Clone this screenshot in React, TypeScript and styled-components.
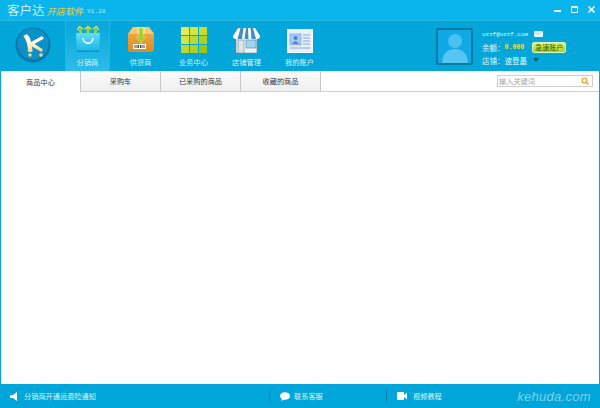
import { createGlobalStyle } from "styled-components";
import styled from "styled-components";
import type { ReactNode } from "react";

const GlobalStyle = createGlobalStyle`
  html, body { margin: 0; padding: 0; background: #fff; }
  #root { width: 600px; height: 408px; }
  * { box-sizing: border-box; }
`;

const cjk = `"Noto Sans CJK SC", "Liberation Sans", sans-serif`;

const Window = styled.div`
  width: 600px;
  height: 408px;
  display: flex;
  flex-direction: column;
  font-family: ${cjk};
  overflow: hidden;
  background: #00a6d9;
`;

const TitleBar = styled.div`
  height: 20px;
  flex: none;
  background: #0ab5ee;
  display: flex;
  align-items: center;
  padding: 0 5px 0 7px;
`;

const Brand = styled.span`
  font-size: 12.5px;
  line-height: 20px;
  color: #cdeefa;
`;

const Product = styled.span`
  font-size: 9.2px;
  font-style: italic;
  color: #ffd21e;
  margin-left: 2px;
  margin-top: 1px;
`;

const Version = styled.span`
  font-family: "Liberation Mono", monospace;
  font-size: 6px;
  color: #bfe9f7;
  margin-left: 4px;
  margin-top: 3px;
`;

const WindowButtons = styled.div`
  margin-left: auto;
  display: flex;
  gap: 10px;
  align-items: center;
  margin-top: -2px;
`;

const Header = styled.div`
  height: 51px;
  flex: none;
  display: flex;
  background: #02a6d8;
  border-top: 1px solid #2bb9e4;
`;

const LogoCell = styled.div`
  width: 65px;
  flex: none;
  padding: 6px 0 0 15px;
`;

const NavItem = styled.div<{ $active?: boolean }>`
  width: 45px;
  margin-right: 8px;
  flex: none;
  display: flex;
  flex-direction: column;
  align-items: center;
  padding-top: 5px;
  background: ${({ $active }) =>
    $active ? "linear-gradient(180deg, #08a6d9 0%, #2cbcea 100%)" : "transparent"};
  border-left: ${({ $active }) => ($active ? "1px solid #27b4e0" : "none")};
  border-right: ${({ $active }) => ($active ? "1px solid #27b4e0" : "none")};
`;

const NavIcon = styled.div`
  height: 27px;
  display: flex;
  align-items: flex-end;
  justify-content: center;
`;

const NavLabel = styled.span`
  font-size: 7.2px;
  line-height: 10px;
  margin-top: 4px;
  color: #d9f3fb;
  white-space: nowrap;
`;

const Profile = styled.div`
  margin-left: auto;
  width: 164px;
  flex: none;
  display: flex;
  align-items: flex-start;
  padding-top: 7px;
`;

const Avatar = styled.div`
  width: 37px;
  height: 37px;
  border: 2px solid #0b78a8;
  border-radius: 2px;
  background: #0ea9e3;
  overflow: hidden;
  flex: none;
`;

const Info = styled.div`
  margin-left: 9px;
  display: flex;
  flex-direction: column;
  gap: 1px;
`;

const InfoRow = styled.div`
  display: flex;
  align-items: center;
  height: 12px;
  font-size: 7.5px;
  color: #e3f6fc;
  white-space: nowrap;
`;

const Email = styled.span`
  font-family: "Liberation Mono", monospace;
  font-size: 5.9px;
  color: #e3f6fc;
  margin-right: 6px;
`;

const Amount = styled.span`
  font-family: "Liberation Mono", monospace;
  font-size: 6.6px;
  font-weight: bold;
  color: #ffd83c;
  margin: 0 8px 0 0;
`;

const TopUp = styled.span`
  height: 11px;
  line-height: 9px;
  padding: 0 2px;
  font-size: 7px;
  color: #355a05;
  background: linear-gradient(180deg, #e6f36a, #a6d422);
  border: 1px solid #dff2c0;
  border-radius: 2px;
`;

const Shop = styled.span`
  margin-right: 6px;
`;

const TabBar = styled.div`
  height: 21px;
  flex: none;
  display: flex;
  align-items: stretch;
  background: #fff;
  border-bottom: 1px solid #d2d2d2;
  margin: 0 1px;
  padding-right: 6px;
`;

const Tab = styled.div<{ $active?: boolean }>`
  width: 80px;
  height: ${({ $active }) => ($active ? "21px" : "20px")};
  flex: none;
  display: flex;
  align-items: center;
  justify-content: center;
  font-size: 7.2px;
  color: #333;
  background: ${({ $active }) =>
    $active ? "#fff" : "linear-gradient(180deg, #fbfbfb, #efefef)"};
  border-right: 1px solid #c8c8c8;
  position: relative;
  z-index: ${({ $active }) => ($active ? 1 : 0)};
`;

const Search = styled.div`
  margin-left: auto;
  align-self: center;
  width: 96px;
  height: 12px;
  border: 1px solid #cfcfcf;
  background: #fff;
  display: flex;
  align-items: center;
  justify-content: space-between;
  padding: 0 3px 0 1px;
  font-size: 7.2px;
  color: #a8a8a8;
`;

const Content = styled.div`
  flex: 1;
  background: #fff;
  margin: 0 1px;
`;

const Footer = styled.div`
  height: 24px;
  flex: none;
  display: flex;
  align-items: center;
  background: #00a6d9;
  color: #dff4fb;
  font-size: 7.2px;
`;

const FooterCell = styled.div<{ $width: number; $gap: number }>`
  width: ${({ $width }) => $width}px;
  flex: none;
  height: 12px;
  display: flex;
  align-items: center;
  padding-left: 10px;
  gap: ${({ $gap }) => $gap}px;
  border-right: 1px solid #0b7eab;
  white-space: nowrap;
`;

const FooterLast = styled(FooterCell)`
  border-right: none;
`;

const Site = styled.span`
  margin-left: auto;
  margin-right: 9px;
  font-family: "Liberation Sans", sans-serif;
  font-style: italic;
  font-size: 13px;
  letter-spacing: 0.3px;
  color: #7fd0ea;
`;

const LogoIcon = () => (
  <svg width="36" height="36" viewBox="0 0 36 36" style={{ display: "block" }}>
    <defs>
      <linearGradient id="k" x1="0" y1="0" x2="0" y2="1">
        <stop offset="0" stopColor="#ffffff" />
        <stop offset="0.55" stopColor="#fff6d8" />
        <stop offset="1" stopColor="#f7d27c" />
      </linearGradient>
    </defs>
    <circle cx="18" cy="18" r="17.5" fill="#0a78ad" />
    <circle cx="18" cy="17" r="15.5" fill="#0c90c8" />
    <path d="M8.5 9 L12 7 Q15 10 16 15 L27 9 L29 11.5 L19.5 17 L28 22.5 L26.5 25 L17 19.5 Q17.5 22 17.5 25 H13 Q13 15 8.5 9 Z" fill="url(#k)" />
    <circle cx="15" cy="28" r="1.8" fill="#f7d27c" />
    <circle cx="26" cy="28" r="1.8" fill="#f7d27c" />
  </svg>
);

const BagIcon = () => (
  <svg width="26" height="27" viewBox="0 0 26 27">
    <defs>
      <linearGradient id="bag" x1="0" y1="0" x2="0" y2="1">
        <stop offset="0" stopColor="#5fe0f4" />
        <stop offset="1" stopColor="#16b4e8" />
      </linearGradient>
    </defs>
    <path d="M6.5 11 L5 3 M13 11 V2 M19.5 11 L21 3" stroke="#a9d62a" strokeWidth="2.6" fill="none" />
    <path d="M2.5 4 L4.5 0.5 L8 3 M9.5 3.5 L13 0.5 L16.5 3.5 M18 3 L21.5 0.5 L23.5 4" stroke="#dbe83f" strokeWidth="1.5" fill="none" />
    <path d="M1 7 H25 L24 26 H2 Z" fill="url(#bag)" />
    <rect x="2" y="24.5" width="22" height="1.5" fill="#0d93c7" />
    <path d="M8 12 C9 19 17 19 18 12" fill="none" stroke="#fff" strokeWidth="1.4" />
  </svg>
);

const BoxIcon = () => (
  <svg width="26" height="27" viewBox="0 0 26 27">
    <defs>
      <linearGradient id="box" x1="0" y1="0" x2="0" y2="1">
        <stop offset="0" stopColor="#f3b04c" />
        <stop offset="1" stopColor="#dd8a22" />
      </linearGradient>
    </defs>
    <path d="M5 1 H21 L26 8 V24 Q26 26 24 26 H2 Q0 26 0 24 V8 Z" fill="url(#box)" />
    <path d="M5 1 H21 L26 8 H0 Z" fill="#f7c873" />
    <rect x="9" y="1" width="8" height="7" fill="#fbdc95" />
    <path d="M11 2 H15 V11 H18 L13 17 L8 11 H11 Z" fill="#a4d02d" stroke="#d9ea80" strokeWidth="0.5" />
    <rect x="5" y="18" width="13" height="5" fill="#fff" />
    <path d="M7 19 V22 M9 19 V22 M10.5 19 V22 M12.5 19 V22 M14 19 V22 M16 19 V22" stroke="#444" strokeWidth="1" />
  </svg>
);

const GridIcon = () => {
  const colors = ["#e2ee59", "#d3e640", "#c4dd30", "#d3e640", "#c0da2a", "#aed21f", "#bcd92a", "#aed21f", "#9ac614"];
  return (
    <svg width="26" height="26" viewBox="0 0 26 26">
      {colors.map((c, i) => (
        <rect key={i} x={(i % 3) * 9} y={Math.floor(i / 3) * 9} width="8" height="8" fill={c} />
      ))}
    </svg>
  );
};

const StoreIcon = () => (
  <svg width="27" height="26" viewBox="0 0 27 26">
    <rect x="3" y="9" width="21" height="17" fill="#eef3f6" stroke="#6f8590" strokeWidth="0.6" />
    <rect x="5" y="13" width="6" height="13" fill="#dce6ea" stroke="#6f8590" strokeWidth="0.6" />
    <rect x="13" y="13" width="10" height="8" fill="#9bd6ef" stroke="#6f8590" strokeWidth="0.6" />
    <path d="M5 1 H22 L27 9 Q27 12 24 12 H3 Q0 12 0 9 Z" fill="#fff" />
    <path d="M7.5 1 H10.5 L9 12 H4.5 Z M13 1 H15 L15.5 12 H11.5 Z M17.5 1 H20 L23 12 H18.5 Z" fill="#3f8fc6" />
  </svg>
);

const CardIcon = () => (
  <svg width="26" height="24" viewBox="0 0 26 24">
    <rect x="0.5" y="0.5" width="25" height="23" fill="#e8f0fb" stroke="#fff" />
    <rect x="3" y="5" width="11" height="11" fill="#a9c8f0" stroke="#6f9adf" strokeWidth="0.6" />
    <circle cx="8.5" cy="9" r="2" fill="#4d82cf" />
    <path d="M5 15 Q8.5 9.5 12 15 Z" fill="#4d82cf" />
    <path d="M16 6 H23 M16 9 H23 M16 12 H23 M16 15 H23 M3 19 H23" stroke="#7ea6e2" strokeWidth="1" />
  </svg>
);

const AvatarArt = () => (
  <svg width="33" height="33" viewBox="0 0 33 33" style={{ display: "block" }}>
    <rect width="33" height="33" fill="#0fa9e6" />
    <circle cx="17" cy="11" r="7" fill="#4cc0ef" />
    <path d="M4 33 Q5 19 17 19 Q29 19 30 33 Z" fill="#55c6f1" />
  </svg>
);

const navItems: { label: string; icon: ReactNode; active?: boolean }[] = [
  { label: "分销商", icon: <BagIcon />, active: true },
  { label: "供货商", icon: <BoxIcon /> },
  { label: "业务中心", icon: <GridIcon /> },
  { label: "店铺管理", icon: <StoreIcon /> },
  { label: "我的账户", icon: <CardIcon /> },
];

const tabs = ["商品中心", "采购车", "已采购的商品", "收藏的商品"];

export default function App() {
  return (
    <Window>
      <GlobalStyle />
      <TitleBar>
        <Brand>客户达</Brand>
        <Product>开店软件</Product>
        <Version>V1.20</Version>
        <WindowButtons>
          <svg width="7" height="7" viewBox="0 0 7 7"><rect x="0" y="4" width="7" height="2" fill="#e6f8fd" /></svg>
          <svg width="7" height="7" viewBox="0 0 7 7"><rect x="0.5" y="0.5" width="6" height="6" fill="none" stroke="#e6f8fd" /><rect x="0" y="0" width="7" height="2" fill="#e6f8fd" /></svg>
          <svg width="7" height="7" viewBox="0 0 7 7"><path d="M0.5 0.5 L6.5 6.5 M6.5 0.5 L0.5 6.5" stroke="#fff" strokeWidth="1.5" /></svg>
        </WindowButtons>
      </TitleBar>
      <Header>
        <LogoCell><LogoIcon /></LogoCell>
        {navItems.map((item) => (
          <NavItem key={item.label} $active={item.active}>
            <NavIcon>{item.icon}</NavIcon>
            <NavLabel>{item.label}</NavLabel>
          </NavItem>
        ))}
        <Profile>
          <Avatar><AvatarArt /></Avatar>
          <Info>
            <InfoRow>
              <Email>uzzf@uzzf.com</Email>
              <svg width="9" height="6" viewBox="0 0 9 6"><rect width="9" height="6" rx="1" fill="#e9f8fd" /><path d="M0.5 0.5 L4.5 3.5 L8.5 0.5" fill="none" stroke="#7cc8e4" strokeWidth="0.7" /></svg>
            </InfoRow>
            <InfoRow>
              余额：<Amount>0.000</Amount><TopUp>急速账户</TopUp>
            </InfoRow>
            <InfoRow>
              店铺：<Shop>速登墨</Shop>
              <svg width="6" height="4" viewBox="0 0 6 4"><path d="M0 0 H6 L3 4 Z" fill="#0b5e80" /></svg>
            </InfoRow>
          </Info>
        </Profile>
      </Header>
      <TabBar>
        {tabs.map((t, i) => (
          <Tab key={t} $active={i === 0}>{t}</Tab>
        ))}
        <Search>
          输入关键词
          <svg width="8" height="8" viewBox="0 0 8 8"><circle cx="3.4" cy="3.4" r="2.4" fill="none" stroke="#f0a020" strokeWidth="1.2" /><path d="M5 5 L7.5 7.5" stroke="#f0a020" strokeWidth="1.4" /></svg>
        </Search>
      </TabBar>
      <Content />
      <Footer>
        <FooterCell $width={270} $gap={6}>
          <svg width="8" height="9" viewBox="0 0 8 9"><path d="M0 3 H3 L7 0 V9 L3 6 H0 Z" fill="#fff" /></svg>
          <span>分销商开通运费险通知</span>
        </FooterCell>
        <FooterCell $width={117} $gap={4}>
          <svg width="10" height="9" viewBox="0 0 10 9"><ellipse cx="5" cy="4" rx="5" ry="3.8" fill="#fff" /><path d="M2 6 L1.5 9 L5 7 Z" fill="#fff" /></svg>
          <span>联系客服</span>
        </FooterCell>
        <FooterLast $width={100} $gap={6}>
          <svg width="10" height="8" viewBox="0 0 10 8"><rect width="7" height="8" fill="#fff" /><path d="M7 3 L10 0.5 V7.5 L7 5 Z" fill="#fff" /></svg>
          <span>视频教程</span>
        </FooterLast>
        <Site>kehuda.com</Site>
      </Footer>
    </Window>
  );
}
